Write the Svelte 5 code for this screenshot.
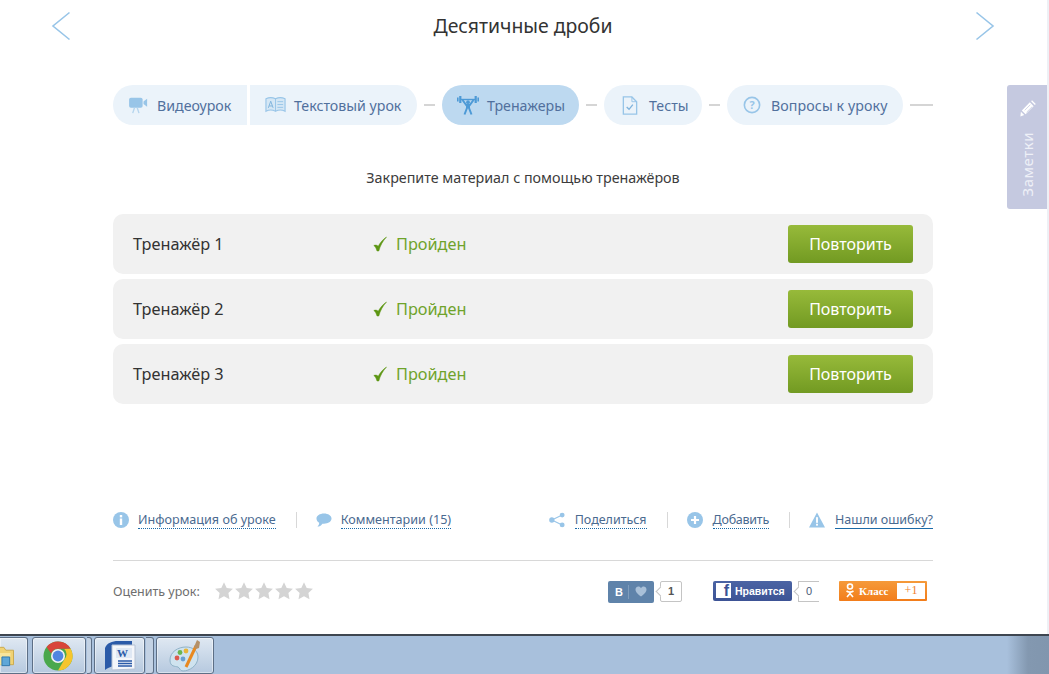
<script lang="ts">
  const rows = [1, 2, 3];
</script>

{#snippet star()}
  <svg class="star" viewBox="0 0 20 20"><path d="M10 1.2l2.7 5.7 6.2.8-4.5 4.3 1.1 6.2L10 15.2l-5.5 3 1.1-6.2L1.100 7.700l6.200-.8z" /></svg>
{/snippet}

<div class="page">
  <main class="lesson">
    <header class="top">
      <svg class="arrow" viewBox="0 0 20 30"><path d="M18.500 1.500L2 15l16.500 13.500" /></svg>
      <h1>Десятичные дроби</h1>
      <svg class="arrow" viewBox="0 0 20 30"><path d="M1.500 1.500L18 15 1.500 28.500" /></svg>
    </header>

    <div class="content">
      <nav class="tabs">
        <div class="pill first">
          <svg class="ico" viewBox="0 0 22 20"><rect x="0" y="2" width="15" height="11" rx="2" fill="#98c5e8" /><path d="M16 6l4-3v9l-4-3z" fill="#98c5e8" /><path d="M6 13l-2 6M9 13l2 6" stroke="#b5d5ee" stroke-width="1.500" fill="none" /></svg>
          <span>Видеоурок</span>
        </div>
        <div class="pill second">
          <svg class="ico book" viewBox="0 0 22 18"><path d="M1 2.500c3-1.500 7-1.500 10 0 3-1.500 7-1.500 10 0v13c-3-1.500-7-1.500-10 0-3-1.500-7-1.500-10 0z" fill="#d5e7f5" stroke="#98c5e8" stroke-width="1.200" /><path d="M11 2.500v13" stroke="#98c5e8" /><path d="M13 5.500h6M13 8.500h6M13 11.500h6" stroke="#98c5e8" /><path d="M3.500 12l2.500-7 2.500 7M4.500 10h3" stroke="#7fb3dc" fill="none" /></svg>
          <span>Текстовый урок</span>
        </div>
        <i class="dash"></i>
        <div class="pill active">
          <svg class="ico lifter" viewBox="0 0 22 20">
            <g fill="#4d9ad6">
              <rect x="0" y="2.500" width="1.600" height="4" />
              <rect x="2.200" y="1" width="2.200" height="7" />
              <rect x="17.600" y="1" width="2.200" height="7" />
              <rect x="20.400" y="2.500" width="1.600" height="4" />
              <rect x="4" y="3.800" width="14" height="1.400" />
              <circle cx="11" cy="7.200" r="1.900" />
              <rect x="9" y="9.500" width="4" height="4" />
            </g>
            <path d="M5.500 5l3.700 5h3.600l3.700-5M10 13l-2.500 6.500M12 13l2.500 6.500" fill="none" stroke="#4d9ad6" stroke-width="2" />
          </svg>
          <span>Тренажеры</span>
        </div>
        <i class="dash"></i>
        <div class="pill tests">
          <svg class="ico doc" viewBox="0 0 16 20"><path d="M1 1h9l5 5v13H1z" fill="none" stroke="#98c5e8" stroke-width="1.400" /><path d="M10 1v5h5" fill="none" stroke="#98c5e8" /><path d="M4.500 11.500l2.500 2.500 4-5" fill="none" stroke="#7fb3dc" stroke-width="1.400" /></svg>
          <span>Тесты</span>
        </div>
        <i class="dash"></i>
        <div class="pill questions">
          <svg class="ico q" viewBox="0 0 20 20"><circle cx="10" cy="10" r="8.500" fill="none" stroke="#98c5e8" stroke-width="1.800" /><text x="10" y="14.500" text-anchor="middle" class="qmark">?</text></svg>
          <span>Вопросы к уроку</span>
        </div>
        <i class="dash last"></i>
      </nav>

      <p class="lead">Закрепите материал с помощью тренажёров</p>

      <section class="list">
        {#each rows as n}
          <div class="row">
            <span class="name">Тренажёр {n}</span>
            <span class="status"><svg viewBox="0 0 14 16"><path d="M.8 9.500c1.200.6 2.200 2.200 3.200 5.500h1.800C7.300 9.500 9.800 5 13.500 1c-3.800 2.500-6.500 6-8.300 9.300C4 9 2.500 8.800.8 9.500z" fill="#5d9613" stroke="#5d9613" stroke-width=".5" /></svg>Пройден</span>
            <button type="button">Повторить</button>
          </div>
        {/each}
      </section>

      <div class="links">
        <div class="link">
          <svg viewBox="0 0 16 16"><circle cx="8" cy="8" r="8" fill="#98c5e8" /><rect x="6.800" y="3" width="2.400" height="2.400" fill="#fff" /><rect x="6.800" y="6.500" width="2.400" height="6.500" fill="#fff" /></svg>
          <a href="#info">Информация об уроке</a>
        </div>
        <i class="sep"></i>
        <div class="link">
          <svg viewBox="0 0 17 16"><path d="M8.500 1C13 1 16.500 3.300 16.500 6.500S13 12 8.500 12c-.6 0-1.200 0-1.700-.1C5.500 13.800 3.500 15 1.500 15c1.200-1 1.800-2.300 1.900-4C1.600 10 .5 8.400.5 6.500.5 3.300 4 1 8.500 1z" fill="#98c5e8" /></svg>
          <a href="#comments">Комментарии (15)</a>
        </div>
        <div class="link wide push">
          <svg viewBox="0 0 17 16"><g fill="#98c5e8"><circle cx="3" cy="8" r="2.800" /><circle cx="14" cy="2.800" r="2.600" /><circle cx="14" cy="13.200" r="2.600" /></g><path d="M3 8l11-5.200M3 8l11 5.200" stroke="#98c5e8" stroke-width="1.200" /></svg>
          <a href="#share">Поделиться</a>
        </div>
        <i class="sep"></i>
        <div class="link wide">
          <svg viewBox="0 0 16 16"><circle cx="8" cy="8" r="8" fill="#98c5e8" /><path d="M8 4v8M4 8h8" stroke="#fff" stroke-width="2.200" /></svg>
          <a class="narrow" href="#add">Добавить</a>
        </div>
        <i class="sep"></i>
        <div class="link wide">
          <svg viewBox="0 0 17 16"><path d="M8.500 0L17 16H0z" fill="#98c5e8" /><rect x="7.500" y="5" width="2" height="6" fill="#fff" /><rect x="7.500" y="12" width="2" height="2" fill="#fff" /></svg>
          <a class="solid" href="#error">Нашли ошибку?</a>
        </div>
      </div>

      <div class="rating">
        <span class="rate-label">Оценить урок:</span>
        <div class="stars">
          {#each [1, 2, 3, 4, 5] as _}
            {@render star()}
          {/each}
        </div>
        <div class="social">
          <div class="share-vk">
            <div class="vk"><b>В</b><i></i><svg viewBox="0 0 12 11"><path d="M6 10.500C2 7.500.5 5.500.5 3.500.5 1.500 2 .5 3.300.5 4.500.5 5.500 1.200 6 2.200 6.500 1.200 7.500.5 8.700.5 10 .5 11.500 1.500 11.500 3.500c0 2-1.500 4-5.500 7z" fill="#a9c0d8" /></svg></div>
            <span class="count vk-count">1</span>
          </div>
          <div class="share-fb">
            <div class="fb"><span class="f">f</span><b>Нравится</b></div>
            <span class="count fb-count">0</span>
          </div>
          <div class="ok">
            <svg viewBox="0 0 10 15"><circle cx="5" cy="3.500" r="2.500" fill="none" stroke="#fff" stroke-width="1.600" /><path d="M1.500 8c2 1.200 5 1.200 7 0M5 9v2M5 10.500L2 14M5 10.500L8 14" fill="none" stroke="#fff" stroke-width="1.600" /></svg>
            <span class="ok-label">Класс</span>
            <span class="ok-plus">+1</span>
          </div>
        </div>
      </div>
    </div>

    <aside class="notes">
      <svg viewBox="0 0 18 18"><path d="M11.500 2.500l4 4L7 15l-4-4z" fill="#fff" /><path d="M12.800 1.200l1-1 4 4-1 1zM2 12.500l3.500 3.500-4 1.500z" fill="#fff" /><path d="M6 11l6-6M8 13l6-6" stroke="#c5c9e0" stroke-width=".8" /></svg>
      <span>Заметки</span>
    </aside>
  </main>

  <footer class="taskbar">
    <div class="task folder">
      <svg viewBox="0 0 28 28"><path d="M-6 5h10l2 3h8v15H-6z" fill="#f0d273" stroke="#c9a94f" /><path d="M-6 11h17l-1 12H-6z" fill="#f8e59c" /><path d="M2 15h8v9H2z" fill="#5fa7d8" stroke="#2f78ad" /></svg>
    </div>
    <div class="task chrome">
      <svg viewBox="0 0 30 30">
        <circle cx="15" cy="15" r="14.500" fill="#4aa84d" />
        <path d="M15 .5a14.500 14.500 0 0 1 12.600 7.200H15a7.300 7.300 0 0 0-6.800 4.700L3.600 6A14.500 14.500 0 0 1 15 .5z" fill="#d8453a" />
        <path d="M27.600 7.700A14.500 14.500 0 0 1 15 29.500l6.200-10.800A7.300 7.300 0 0 0 21.300 8z" fill="#f6c52c" />
        <circle cx="15" cy="15" r="7" fill="#f2f2f2" />
        <circle cx="15" cy="15" r="5.400" fill="#4f86e0" />
      </svg>
    </div>
    <i class="sliver"></i>
    <div class="task word">
      <svg viewBox="0 0 32 32">
        <path d="M1 8C3 3 8 1 14 1h14v6H10v19c-4 1-7 2-9 4z" fill="#2a5aa8" />
        <path d="M8 5h23v24l-23 1z" fill="#f4f6fa" stroke="#b6c2d4" />
        <rect x="12" y="8" width="16" height="10" fill="#dfe8f4" />
        <text x="13" y="17" class="wmark">W</text>
        <path d="M14 21h14M14 23.500h14M14 26h14" stroke="#2a5aa8" stroke-width="1.400" />
      </svg>
    </div>
    <i class="sliver wide"></i>
    <div class="task paint">
      <svg viewBox="0 0 34 34">
        <path d="M2 21C2 13 10 8 18 8c7 0 12 4 12 10 0 9-9 14-15 14-3 0-3-3-5-4-3-1-8 0-8-7z" fill="#cfe3ef" stroke="#8fb2c8" />
        <circle cx="9" cy="19" r="2.400" fill="#dc5a4e" />
        <circle cx="12" cy="13.500" r="2.400" fill="#69b552" />
        <circle cx="18" cy="12" r="2.400" fill="#e8b53a" />
        <circle cx="15" cy="20" r="2.400" fill="#6a9fd0" />
        <path d="M28 7L18 28" stroke="#e8891f" stroke-width="3" />
        <path d="M26 8l3-7 3 2-1 6-3 1z" fill="#b59067" />
      </svg>
    </div>
  </footer>
</div>

<style>
  :global(body) {
    margin: 0;
    background: #fff;
  }

  .page {
    display: flex;
    flex-direction: column;
    width: 1049px;
    height: 674px;
    overflow: hidden;
    font-family: "Noto Sans", "Open Sans", sans-serif;
    color: #333;
  }

  .lesson {
    position: relative;
    flex: none;
    height: 634px;
    box-sizing: border-box;
    border-right: 2px solid #eef0f5;
  }

  .top {
    display: flex;
    align-items: center;
    justify-content: space-between;
    height: 52px;
    padding: 0 52px 0 51px;
  }

  .arrow {
    width: 20px;
    height: 30px;
    fill: none;
    stroke: #98c5e8;
    stroke-width: 1.600;
  }

  h1 {
    margin: 0;
    font-size: 19.400px;
    font-weight: 400;
    color: #333;
    line-height: 26px;
  }

  .content {
    width: 820px;
    margin-left: 113px;
    padding-top: 33px;
  }

  .tabs {
    display: flex;
    align-items: center;
    height: 40px;
  }

  .pill {
    display: flex;
    align-items: center;
    gap: 10px;
    box-sizing: border-box;
    height: 40px;
    padding: 0 15px 0 16px;
    border-radius: 20px;
    background: #ebf3fa;
    color: #51709d;
    font-size: 14.200px;
    white-space: nowrap;
  }

  .pill.first {
    width: 134px;
    gap: 8px;
    border-radius: 20px 0 0 20px;
    margin-right: 3px;
  }

  .pill.second {
    width: 167px;
    gap: 8px;
    padding-left: 15px;
    border-radius: 0 20px 20px 0;
  }

  .pill.active {
    width: 137px;
    gap: 8px;
    padding-left: 15px;
    background: #bdd9f0;
  }

  .pill.tests {
    width: 98px;
    padding-left: 18px;
    gap: 11px;
  }

  .pill.questions {
    width: 176px;
    letter-spacing: .1px;
  }

  .ico {
    width: 20px;
    height: 18px;
    flex: none;
  }

  .book {
    width: 21px;
  }

  .lifter {
    width: 22px;
    height: 20px;
  }

  .doc {
    width: 16px;
    height: 19px;
  }

  .q {
    width: 18px;
    height: 18px;
  }

  .qmark {
    font: 700 12px "Noto Sans", sans-serif;
    fill: #98c5e8;
  }

  .dash {
    flex: none;
    width: 11px;
    height: 2px;
    margin: 0 7px;
    background: #d5d5d5;
  }

  .dash.last {
    flex: 1;
    margin-right: 0;
  }

  .lead {
    margin: 43px 0 0;
    height: 20px;
    font-size: 14.300px;
    line-height: 20px;
    text-align: center;
    color: #3c3c3c;
  }

  .list {
    display: flex;
    flex-direction: column;
    gap: 5px;
    margin-top: 26px;
  }

  .row {
    display: grid;
    grid-template-columns: 240px 1fr auto;
    align-items: center;
    height: 60px;
    padding: 0 20px;
    border-radius: 10px;
    background: #f1f1f1;
    font-size: 16.300px;
  }

  .name {
    color: #333;
  }

  .status {
    display: flex;
    align-items: center;
    gap: 9px;
    color: #6fa32b;
  }

  .status svg {
    width: 14px;
    height: 16px;
  }

  button {
    width: 125px;
    height: 38px;
    border: 0;
    border-radius: 3px;
    background: linear-gradient(#97ba3a, #729a22);
    color: #fff;
    font: inherit;
    font-size: 16px;
  }

  .links {
    display: flex;
    align-items: center;
    height: 24px;
    margin-top: 104px;
    font-size: 12.600px;
  }

  .link {
    display: flex;
    align-items: center;
    gap: 9px;
  }

  .link.wide {
    gap: 10px;
    font-size: 12.500px;
  }

  .link svg {
    width: 16px;
    height: 16px;
    flex: none;
  }

  .link a {
    color: #4a6a90;
    text-decoration: none;
    border-bottom: 1px dotted #1b6aa8;
    line-height: 16px;
  }

  .link a.narrow {
    letter-spacing: -.25px;
  }

  .link a.solid {
    border-bottom: 1px solid #1b6aa8;
  }

  .push {
    margin-left: auto;
  }

  .sep {
    width: 1px;
    height: 16px;
    margin: 0 19px 0 20px;
    background: #d8d8d8;
  }

  .rating {
    display: flex;
    align-items: center;
    height: 60px;
    margin-top: 28px;
    border-top: 1px solid #d8d8d8;
  }

  .rate-label {
    font-size: 12.500px;
    color: #6e6e6e;
    margin-right: 14px;
  }

  .stars {
    display: flex;
  }

  .star {
    width: 20px;
    height: 20px;
    fill: #d4d4d4;
  }

  .social {
    display: flex;
    align-items: flex-start;
    margin: 1px 6px 0 auto;
    gap: 20px;
    height: 22px;
    font-family: "Liberation Sans", sans-serif;
  }

  .share-vk,
  .share-fb {
    display: flex;
    gap: 6px;
  }

  .share-vk {
    margin-right: 11px;
  }

  .vk {
    display: flex;
    align-items: center;
    justify-content: space-between;
    box-sizing: border-box;
    width: 46px;
    height: 22px;
    padding: 0 7px;
    border-radius: 2px;
    background: #5f83aa;
    color: #fff;
    font-size: 11px;
  }

  .vk i {
    width: 1px;
    height: 14px;
    background: #7f9dbc;
  }

  .vk svg {
    width: 12px;
    height: 11px;
  }

  .count {
    position: relative;
    display: flex;
    align-items: center;
    justify-content: center;
    box-sizing: border-box;
    height: 21px;
    border: 1px solid #c4c4c4;
    background: #fff;
    font-size: 11px;
    color: #555;
  }

  .vk-count {
    width: 22px;
    border-radius: 2px;
    font-weight: 700;
  }

  .fb-count {
    width: 21px;
    border-right: 0;
    color: #4a5a78;
  }

  .count::before {
    content: "";
    position: absolute;
    left: -4px;
    top: 6px;
    width: 6px;
    height: 6px;
    background: #fff;
    border-left: 1px solid #c4c4c4;
    border-bottom: 1px solid #c4c4c4;
    transform: rotate(45deg);
  }

  .fb {
    display: flex;
    align-items: center;
    gap: 4px;
    box-sizing: border-box;
    width: 79px;
    height: 20px;
    padding: 0 3px;
    border-radius: 2px;
    background: linear-gradient(#4b64a4, #3c5395);
    color: #fff;
    font-size: 10.500px;
    white-space: nowrap;
  }

  .f {
    display: flex;
    align-items: flex-end;
    justify-content: flex-end;
    width: 15px;
    height: 15px;
    padding-right: 2px;
    box-sizing: border-box;
    background: #fff;
    color: #3c5395;
    font-size: 16px;
    font-weight: 700;
    line-height: 15px;
    overflow: hidden;
  }

  .ok {
    display: flex;
    align-items: center;
    box-sizing: border-box;
    width: 88px;
    height: 20px;
    padding: 2px;
    border-radius: 1px;
    background: linear-gradient(#f59a3a, #f27d1a);
    color: #fff;
    font-family: "Liberation Serif", serif;
    font-size: 11px;
    font-weight: 700;
  }

  .ok svg {
    width: 10px;
    height: 15px;
    margin: 0 4px 0 4px;
  }

  .ok-label {
    width: 38px;
  }

  .ok-plus {
    flex: 1;
    align-self: stretch;
    display: flex;
    align-items: center;
    justify-content: center;
    background: #fff;
    color: #ef7e2a;
    font-weight: 400;
    font-size: 12px;
  }

  .notes {
    position: absolute;
    top: 85px;
    left: 1007px;
    display: flex;
    flex-direction: column;
    align-items: center;
    gap: 15px;
    box-sizing: border-box;
    width: 40px;
    height: 124px;
    padding-top: 15px;
    border-radius: 3px 0 0 3px;
    background: #c5c9e0;
    color: #eef0f7;
  }

  .notes svg {
    width: 17px;
    height: 17px;
    flex: none;
  }

  .notes span {
    writing-mode: vertical-rl;
    transform: rotate(180deg);
    font-size: 15px;
    letter-spacing: .5px;
  }

  .taskbar {
    flex: 1;
    display: flex;
    align-items: stretch;
    box-sizing: border-box;
    padding: 1px 0 0;
    border-top: 2px solid #3e4650;
    background: linear-gradient(90deg, #a8c0dc 0, #a8c0dc 96%, #8398b0 98%, #8196ae 100%);
  }

  .task {
    display: flex;
    align-items: center;
    justify-content: center;
    box-sizing: border-box;
    height: 37px;
    border: 1px solid #5d6f86;
    border-radius: 3px;
    background: linear-gradient(#dfe8f2, #b6c9df);
    box-shadow: inset 0 0 0 1px rgba(255, 255, 255, .45);
  }

  .folder {
    width: 28px;
    margin-right: 4px;
    border-left: 0;
    border-radius: 0 3px 3px 0;
  }

  .folder svg {
    width: 28px;
    height: 28px;
  }

  .chrome {
    width: 54px;
    padding-right: 2px;
  }

  .chrome svg {
    width: 30px;
    height: 30px;
  }

  .sliver {
    flex: none;
    width: 5px;
    height: 37px;
    margin: 0 2px 0 1px;
    box-sizing: border-box;
    border: 1px solid #5d6f86;
    border-left: 0;
    border-radius: 0 3px 3px 0;
    background: #c3d2e4;
  }

  .sliver.wide {
    width: 8px;
  }

  .word {
    width: 51px;
  }

  .word svg {
    width: 32px;
    height: 32px;
  }

  .wmark {
    font: 700 11px "Liberation Serif", serif;
    fill: #2a5aa8;
  }

  .paint {
    width: 58px;
  }

  .paint svg {
    width: 34px;
    height: 34px;
  }
</style>
